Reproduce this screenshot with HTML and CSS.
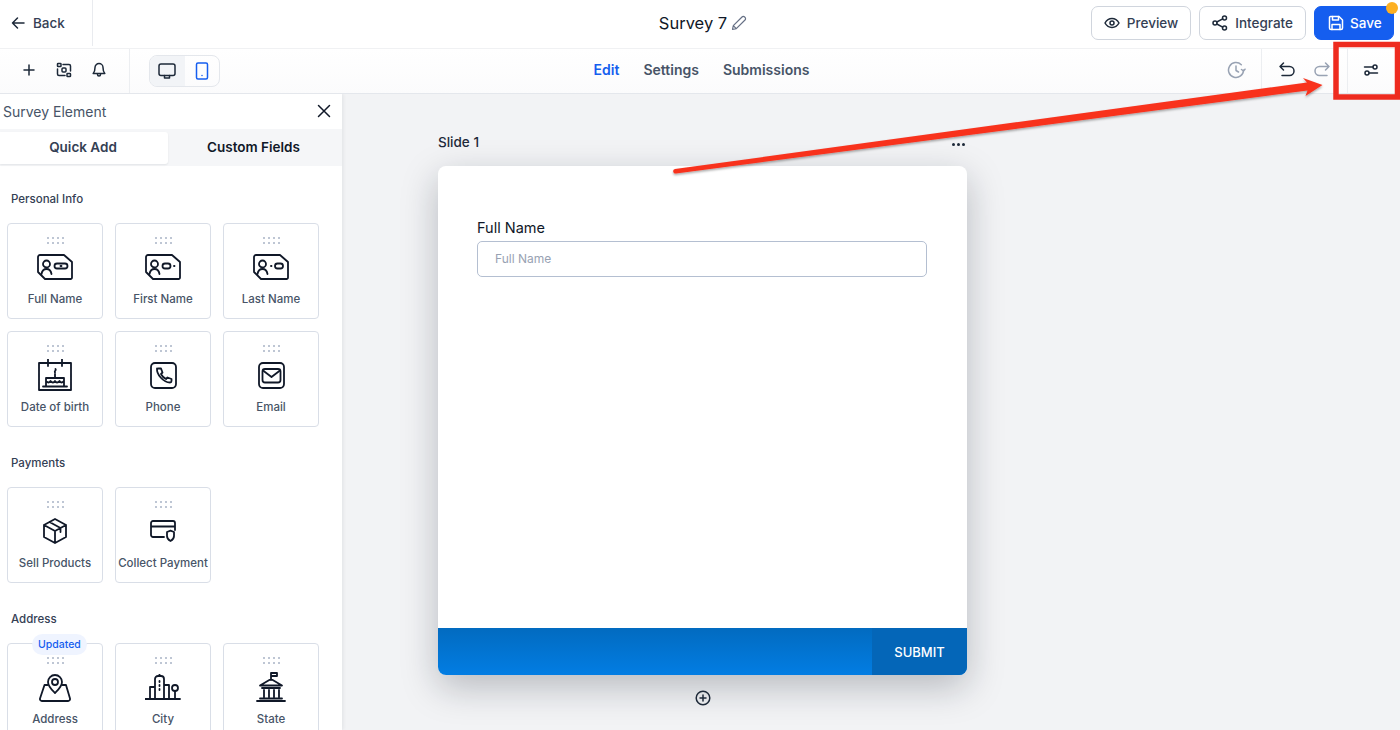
FILE: index.html
```html
<!DOCTYPE html>
<html lang="en">
<head>
    <meta charset="UTF-8">
    <title>Survey 7</title>
    <link rel="stylesheet" href="styles.css">
</head>
<body>
    <header class="topbar">
        <a class="back">
            <svg width="14" height="14" viewBox="0 0 14 14" class="line"><path d="M13 7H1.500M6.500 2l-5 5 5 5"/></svg>
            <span>Back</span>
        </a>
        <div class="title">
            <span>Survey 7</span>
            <svg width="16" height="16" viewBox="0 0 16 16" class="line pencil"><path d="M1.500 14.500l.8-3.800L11 2a1.800 1.800 0 0 1 2.600 0l.4.4a1.800 1.800 0 0 1 0 2.600l-8.700 8.700zM2.300 10.700l3 3"/></svg>
        </div>
        <div class="actions">
            <button class="btn">
                <svg width="16" height="16" viewBox="0 0 16 16" class="line"><path d="M1 8s2.500-4.500 7-4.500S15 8 15 8s-2.500 4.500-7 4.500S1 8 1 8z"/><circle cx="8" cy="8" r="2"/></svg>
                Preview
            </button>
            <button class="btn">
                <svg width="16" height="16" viewBox="0 0 16 16" class="line"><circle cx="12.500" cy="3" r="2"/><circle cx="3" cy="8" r="2"/><circle cx="12.500" cy="13" r="2"/><path d="M4.800 7l5.900-3.100M4.800 9l5.900 3.100"/></svg>
                Integrate
            </button>
            <button class="btn btn-save">
                <svg width="16" height="16" viewBox="0 0 16 16" class="line"><path d="M2.500 1.500H11L14.500 5v8a1.500 1.500 0 0 1-1.500 1.500H3A1.500 1.500 0 0 1 1.500 13V2.500a1 1 0 0 1 1-1z"/><path d="M4.500 1.500V5h6V1.500M4 14.500v-5h8v5"/></svg>
                Save
                <span class="save-dot"></span>
            </button>
        </div>
    </header>

    <div class="toolbar">
        <div class="tool-left">
            <div class="tools">
                <svg width="16" height="16" viewBox="0 0 16 16" class="line"><path d="M8 3v10M3 8h10"/></svg>
                <svg width="16" height="16" viewBox="0 0 16 16" class="line"><rect x="1.500" y="1.500" width="3.500" height="3" rx=".6"/><rect x="11" y="11.500" width="3.500" height="3" rx=".6"/><rect x="6" y="6" width="4" height="4" rx="1"/><path d="M7 2.500h6A1.500 1.500 0 0 1 14.500 4v5M9 13.500H3A1.500 1.500 0 0 1 1.500 12V7"/></svg>
                <svg width="16" height="16" viewBox="0 0 16 16" class="line"><path d="M8 1.500a4 4 0 0 0-4 4c0 4-1.800 6-1.800 6h11.600S12 9.500 12 5.500a4 4 0 0 0-4-4zM6.500 11.500v1a1.500 1.500 0 0 0 3 0v-1"/></svg>
            </div>
            <div class="device-toggle">
                <span class="device device-on">
                    <svg width="18" height="18" viewBox="0 0 18 18" class="line"><rect x="1" y="2" width="16" height="11.500" rx="2"/><path d="M6.500 13.500V16h5v-2.500"/></svg>
                </span>
                <span class="device">
                    <svg width="14" height="18" viewBox="0 0 14 18" class="line blue"><rect x="1.500" y="1" width="11" height="16" rx="1.500"/><path d="M7 13.500v.1"/></svg>
                </span>
            </div>
        </div>
        <nav class="tabs-nav">
            <a class="nav-on">Edit</a>
            <a>Settings</a>
            <a>Submissions</a>
        </nav>
        <div class="tool-right">
            <svg class="line grey history" width="20" height="20" viewBox="0 0 20 20"><path d="M17.500 10a7.500 7.500 0 1 1-2.200-5.300M10 6v4.500l2.500 1.500M15.500 9.500l2 1.500 1.500-1.800"/></svg>
            <div class="undo-redo">
                <svg class="line" width="20" height="20" viewBox="0 0 20 20"><path d="M6.500 3L3 6.500 6.500 10M3 6.500h9.500a4.500 4.500 0 0 1 0 9H5"/></svg>
                <svg class="line grey" width="20" height="20" viewBox="0 0 20 20"><path d="M13.500 3L17 6.500 13.500 10M17 6.500H7.500a4.500 4.500 0 0 0 0 9H15"/></svg>
            </div>
            <div class="slot-settings">
                <svg class="line" width="16" height="16" viewBox="0 0 16 16"><path d="M1.500 5H10M6 11h8.500"/><circle cx="12" cy="5" r="2"/><circle cx="4" cy="11" r="2"/></svg>
            </div>
        </div>
    </div>

    <div class="main">
        <aside class="sidebar">
            <div class="side-head">
                <span>Survey Element</span>
                <svg class="line close" width="14" height="14" viewBox="0 0 14 14"><path d="M1.500 1.500l11 11M12.500 1.500l-11 11"/></svg>
            </div>
            <div class="side-tabs">
                <div class="side-tab side-tab-on">Quick Add</div>
                <div class="side-tab">Custom Fields</div>
            </div>
            <div class="fields">
                <h3>Personal Info</h3>
                <div class="field-grid">
                    <div class="field">
                        <svg class="drag" width="17" height="7"><use href="#dots"/></svg>
                        <div class="field-icon"><svg class="ink" width="36" height="26" viewBox="0 0 36 26"><use href="#card"/><circle cx="9.500" cy="10" r="3.500"/><path d="M4.500 20c.5-3 2.200-5 5-5s4.500 2 5 5"/><rect x="17.500" y="9.500" width="13" height="5" rx="2.500"/><path d="M23.500 12h1"/></svg></div>
                        <span>Full Name</span>
                    </div>
                    <div class="field">
                        <svg class="drag" width="17" height="7"><use href="#dots"/></svg>
                        <div class="field-icon"><svg class="ink" width="36" height="26" viewBox="0 0 36 26"><use href="#card"/><circle cx="9.500" cy="10" r="3.500"/><path d="M4.500 20c.5-3 2.200-5 5-5s4.500 2 5 5"/><rect x="17.500" y="9.500" width="8" height="5" rx="2.500"/><path d="M29 12h.5"/></svg></div>
                        <span>First Name</span>
                    </div>
                    <div class="field">
                        <svg class="drag" width="17" height="7"><use href="#dots"/></svg>
                        <div class="field-icon"><svg class="ink" width="36" height="26" viewBox="0 0 36 26"><use href="#card"/><circle cx="9.500" cy="10" r="3.500"/><path d="M4.500 20c.5-3 2.200-5 5-5s4.500 2 5 5"/><path d="M18 12h.5"/><rect x="22" y="9.500" width="8" height="5" rx="2.500"/></svg></div>
                        <span>Last Name</span>
                    </div>
                    <div class="field">
                        <svg class="drag" width="17" height="7"><use href="#dots"/></svg>
                        <div class="field-icon"><svg class="ink" width="34" height="32" viewBox="0 0 34 32"><path d="M1 4h32v27H1zM10 0v7M24 0v7M8 27v-8h18v8M5 27.500h24M8 22c2 2 3 2 4.500 0 1.500 2 3.500 2 4.500 0 1 2 3 2 4.500 0 1.500 2 2.500 2 4.500 0M17 19v-4M17.500 10c1 1.500-1.500 2-.5 3.500"/></svg></div>
                        <span>Date of birth</span>
                    </div>
                    <div class="field">
                        <svg class="drag" width="17" height="7"><use href="#dots"/></svg>
                        <div class="field-icon"><svg class="ink" width="27" height="27" viewBox="0 0 27 27"><rect x="1" y="1" width="25" height="25" rx="4"/><path d="M7 6.500c-.5 6 6.500 14 13 14 1 0 1.500-.5 1.500-1.500v-2l-4-1.500-1.500 1.500c-2-1-4-3-5-5l1.500-1.500-1.500-4H8.500c-1 0-1.500 0-1.500.5z"/></svg></div>
                        <span>Phone</span>
                    </div>
                    <div class="field">
                        <svg class="drag" width="17" height="7"><use href="#dots"/></svg>
                        <div class="field-icon"><svg class="ink" width="27" height="27" viewBox="0 0 27 27"><rect x="1" y="1" width="25" height="25" rx="4"/><rect x="4.500" y="7" width="18" height="13.500" rx="2.500"/><path d="M5 8.500l8.500 6.500L22 8.500"/></svg></div>
                        <span>Email</span>
                    </div>
                </div>

                <h3>Payments</h3>
                <div class="field-grid">
                    <div class="field">
                        <svg class="drag" width="17" height="7"><use href="#dots"/></svg>
                        <div class="field-icon"><svg class="ink" width="26" height="26" viewBox="0 0 26 26"><path d="M13 1l11 6v12l-11 6-11-6V7zM2 7l11 6 11-6M13 13v12M7.500 4l11 6v4"/></svg></div>
                        <span>Sell Products</span>
                    </div>
                    <div class="field">
                        <svg class="drag" width="17" height="7"><use href="#dots"/></svg>
                        <div class="field-icon"><svg class="ink" width="26" height="22" viewBox="0 0 26 22"><path d="M14 17H3a2 2 0 0 1-2-2V3a2 2 0 0 1 2-2h20a2 2 0 0 1 2 2v7M1 6.500h24M17 12l3.500-1.300L24 12v4c0 2.500-1.500 4-3.500 5-2-1-3.500-2.500-3.500-5z"/></svg></div>
                        <span>Collect Payment</span>
                    </div>
                </div>

                <h3>Address</h3>
                <div class="field-grid">
                    <div class="field">
                        <span class="badge">Updated</span>
                        <svg class="drag" width="17" height="7"><use href="#dots"/></svg>
                        <div class="field-icon"><svg class="ink" width="32" height="29" viewBox="0 0 32 29"><path d="M16 20c-3-3-7-6.500-7-11a7 7 0 0 1 14 0c0 4.500-4 8-7 11z"/><circle cx="16" cy="9" r="3"/><path d="M8.500 12h-3L1 25.500A2 2 0 0 0 3 28h26a2 2 0 0 0 2-2.500L27 12h-3.500"/></svg></div>
                        <span>Address</span>
                    </div>
                    <div class="field">
                        <svg class="drag" width="17" height="7"><use href="#dots"/></svg>
                        <div class="field-icon"><svg class="ink" width="36" height="26" viewBox="0 0 36 26"><path d="M0 25h35M5 25V13h5M10 25V5a3 3 0 0 1 3-3h3a3 3 0 0 1 3 3v20M19 11h5v14M14.500 2V0M14.500 7v1M14.500 11v1M14.500 15v1M30 25v-8"/><circle cx="30" cy="14" r="3"/></svg></div>
                        <span>City</span>
                    </div>
                    <div class="field">
                        <svg class="drag" width="17" height="7"><use href="#dots"/></svg>
                        <div class="field-icon"><svg class="ink" width="30" height="30" viewBox="0 0 30 30"><path d="M1 29h28M4 26.500h22M15 8V1h6v3h-6M4 13.500L15 7l11 6.500zM6 16h18M8 18v7M13 18v7M18 18v7M23 18v7"/></svg></div>
                        <span>State</span>
                    </div>
                </div>
            </div>
        </aside>

        <section class="canvas">
            <div class="slide-head">
                <span>Slide 1</span>
                <span class="more"><i></i><i></i><i></i></span>
            </div>
            <div class="slide">
                <div class="slide-body">
                    <label class="q-label" for="fullname">Full Name</label>
                    <input class="q-input" id="fullname" type="text" placeholder="Full Name">
                </div>
                <div class="slide-foot">
                    <div class="submit">SUBMIT</div>
                </div>
            </div>
            <div class="add-slide">
                <svg class="line" width="16" height="16" viewBox="0 0 16 16"><circle cx="8" cy="8" r="6.800"/><path d="M8 5v6M5 8h6"/></svg>
            </div>
        </section>
    </div>

    <!-- annotation on top of the screenshot -->
    <svg class="annotation" width="1400" height="730" viewBox="0 0 1400 730">
        <defs>
            <filter id="soft" x="-5%" y="-20%" width="110%" height="150%"><feDropShadow dx="0" dy="1.500" stdDeviation="1.200" flood-opacity=".35"/></filter>
        </defs>
        <path class="arrow" filter="url(#soft)" d="M675 169L1307 82.500 1303 78 1322.500 85 1305.500 96 1307.500 90.500 676 173.500a2.200 2.200 0 0 1-1-4.500z"/>
        <rect class="red-box" x="1336" y="44.500" width="61.500" height="52.500"/>
    </svg>

    <svg class="defs" width="0" height="0">
        <defs>
            <g id="dots" fill="#a9b3c6">
                <circle cx="1" cy="1" r="1"/><circle cx="6" cy="1" r="1"/><circle cx="11" cy="1" r="1"/><circle cx="16" cy="1" r="1"/>
                <circle cx="1" cy="6" r="1"/><circle cx="6" cy="6" r="1"/><circle cx="11" cy="6" r="1"/><circle cx="16" cy="6" r="1"/>
            </g>
            <path id="card" d="M3 1h24l8 7v15.500a1.500 1.500 0 0 1-1.500 1.500H8l-7-7V3a2 2 0 0 1 2-2z"/>
        </defs>
    </svg>
</body>
</html>
```

FILE: styles.css
```css
* {
    box-sizing: border-box;
}
html, body {
    margin: 0;
    height: 730px;
    overflow: hidden;
}
body {
    position: relative;
    font-family: Inter, "Noto Sans", sans-serif;
    background-color: #fff;
    color: #101828;
}
svg {
    display: block;
    flex-shrink: 0;
}
.line {
    fill: none;
    stroke: #1d2939;
    stroke-width: 1.5;
    stroke-linecap: round;
    stroke-linejoin: round;
}
.line.grey {
    stroke: #98a2b3;
}
.line.blue {
    stroke: #155eef;
}
.ink {
    fill: none;
    stroke: #101828;
    stroke-width: 1.8;
    stroke-linejoin: round;
    stroke-linecap: round;
}

/* top bar */
.topbar {
    height: 49px;
    display: grid;
    grid-template-columns: 1fr auto 1fr;
    align-items: center;
    border-bottom: 1px solid #f0f1f3;
}
.back {
    width: 93px;
    height: 46px;
    margin-top: -2px;
    display: flex;
    align-items: center;
    gap: 8px;
    padding-left: 11px;
    border-right: 1px solid #e9ebef;
    font-size: 13.5px;
    font-weight: 500;
    color: #344054;
}
.title {
    display: flex;
    align-items: center;
    gap: 4px;
    padding-left: 6px;
    margin-top: -2px;
    font-size: 16.5px;
}
.pencil {
    stroke: #667085;
    stroke-width: 1.2;
}
.actions {
    display: flex;
    justify-content: flex-end;
    gap: 8px;
    padding-right: 6px;
    margin-top: -3px;
}
.btn {
    position: relative;
    height: 34px;
    display: flex;
    align-items: center;
    gap: 7px;
    padding: 0 12px;
    border: 1px solid #d0d5dd;
    border-radius: 7px;
    background-color: #fff;
    font-family: inherit;
    font-size: 13.5px;
    font-weight: 500;
    color: #344054;
}
.btn-save {
    width: 80px;
    gap: 6px;
    padding: 0 13px;
    border-color: #155eef;
    background-color: #155eef;
    color: #fff;
}
.btn-save .line {
    stroke: #fff;
}
.save-dot {
    position: absolute;
    top: -5px;
    right: -5px;
    width: 12px;
    height: 12px;
    border-radius: 50%;
    background-color: #fdb022;
}

/* second bar */
.toolbar {
    height: 45px;
    display: grid;
    grid-template-columns: 1fr auto 1fr;
    align-items: center;
    border-bottom: 1px solid #e4e7ec;
    background: linear-gradient(#fff, #fbfbfc);
}
.tool-left {
    display: flex;
    align-items: center;
    height: 100%;
}
.tools {
    width: 130px;
    height: 100%;
    display: flex;
    align-items: center;
    gap: 19px;
    padding: 0 0 3px 21px;
    border-right: 1px solid #eceef1;
}
.device-toggle {
    display: flex;
    margin-left: 19px;
    width: 71px;
    height: 32px;
    border: 1px solid #e4e7ec;
    border-radius: 8px;
    overflow: hidden;
}
.device {
    flex: 1;
    display: flex;
    align-items: center;
    justify-content: center;
}
.device-on {
    background-color: #f2f4f7;
}
.tabs-nav {
    display: flex;
    gap: 24px;
    padding-left: 3px;
    margin-top: -3px;
    font-size: 14px;
    font-weight: 600;
    color: #475467;
}
.nav-on {
    color: #155eef;
}
.tool-right {
    display: flex;
    align-items: center;
    justify-content: flex-end;
    height: 100%;
}
.history {
    margin: 0 15px 3px 0;
}
.undo-redo {
    height: 100%;
    display: flex;
    align-items: center;
    gap: 15px;
    padding: 0 15px 3px;
    border-left: 1px solid #eceef1;
}
.slot-settings {
    width: 53px;
    height: 100%;
    display: flex;
    align-items: center;
    justify-content: center;
    padding: 0 6px 3px 0;
    border-left: 1px solid #eceef1;
}

/* main area */
.main {
    height: 636px;
    display: flex;
    overflow: hidden;
}
.sidebar {
    width: 342px;
    flex-shrink: 0;
    background-color: #fff;
    box-shadow: 1px 0 4px rgba(16, 24, 40, .08);
    z-index: 1;
}
.side-head {
    height: 35px;
    display: flex;
    align-items: center;
    justify-content: space-between;
    padding: 0 11px 1px 3px;
    font-size: 14px;
    color: #475467;
}
.close {
    stroke: #101828;
}
.side-tabs {
    height: 37px;
    display: flex;
    align-items: center;
    background-color: #f5f6f8;
}
.side-tab {
    width: 171px;
    height: 32px;
    display: flex;
    align-items: center;
    justify-content: center;
    padding-bottom: 1px;
    font-size: 13.5px;
    font-weight: 600;
    color: #101828;
}
.side-tab-on {
    width: 168px;
    padding-right: 2px;
    background-color: #fff;
    border-radius: 0 3px 3px 0;
    box-shadow: 0 1px 2px rgba(16, 24, 40, .08);
    color: #344054;
}
.fields {
    padding: 25px 7px 0;
}
.fields h3 {
    margin: 0 0 16px 4px;
    font-size: 11.5px;
    line-height: 16px;
    font-weight: 500;
    color: #344054;
}
.field-grid {
    display: grid;
    grid-template-columns: repeat(3, 96px);
    gap: 12px;
    margin-bottom: 28px;
}
.field {
    position: relative;
    height: 96px;
    display: flex;
    flex-direction: column;
    align-items: center;
    padding-top: 13px;
    border: 1px solid #d9dee7;
    border-radius: 4px;
    font-size: 11.5px;
    line-height: 16px;
    font-weight: 500;
    color: #475467;
    white-space: nowrap;
}
.field-icon {
    height: 36px;
    margin: 5px 0 6px;
    display: flex;
    align-items: center;
    justify-content: center;
}
.badge {
    position: absolute;
    top: -10px;
    left: 24px;
    height: 21px;
    padding: 0 6px;
    border-radius: 11px;
    background-color: #eff4ff;
    font-size: 10.5px;
    line-height: 21px;
    font-weight: 500;
    color: #155eef;
}

/* canvas */
.canvas {
    flex: 1;
    padding: 38px 0 0 96px;
    background-color: #f2f3f5;
}
.slide-head {
    width: 529px;
    height: 20px;
    display: flex;
    align-items: center;
    justify-content: space-between;
    margin-bottom: 14px;
    padding-right: 2px;
    font-size: 13.5px;
    font-weight: 500;
    color: #1d2939;
}
.more {
    display: flex;
    gap: 2px;
    margin-top: 4px;
}
.more i {
    width: 3px;
    height: 3px;
    border-radius: 50%;
    background-color: #1d2939;
}
.slide {
    width: 529px;
    height: 509px;
    display: flex;
    flex-direction: column;
    border-radius: 8px;
    background-color: #fff;
    box-shadow: 0 12px 36px rgba(16, 24, 40, .26);
    overflow: hidden;
}
.slide-body {
    flex: 1;
    padding: 52px 40px 0 39px;
}
.q-label {
    display: block;
    margin-bottom: 4px;
    font-size: 14.5px;
    line-height: 19px;
    color: #101828;
}
.q-input {
    display: block;
    width: 100%;
    height: 36px;
    padding: 0 17px 2px;
    border: 1.5px solid #b4bfd1;
    border-radius: 5px;
    font-family: inherit;
    font-size: 12px;
    background-color: #fff;
}
.q-input::placeholder {
    color: #98a2b3;
}
.slide-foot {
    height: 47px;
    display: flex;
    justify-content: flex-end;
    background: linear-gradient(#026bc0, #027de3);
}
.submit {
    width: 95px;
    display: flex;
    align-items: center;
    justify-content: center;
    background-color: #0466b8;
    font-size: 13px;
    font-weight: 500;
    color: #fff;
}
.add-slide {
    width: 529px;
    display: flex;
    justify-content: center;
    margin-top: 15px;
}

/* red annotation */
.annotation {
    position: absolute;
    top: 0;
    left: 0;
    pointer-events: none;
}
.arrow {
    fill: #f8321f;
}
.red-box {
    fill: none;
    stroke: #ee2b1f;
    stroke-width: 5.5;
}
.defs {
    position: absolute;
}
```
